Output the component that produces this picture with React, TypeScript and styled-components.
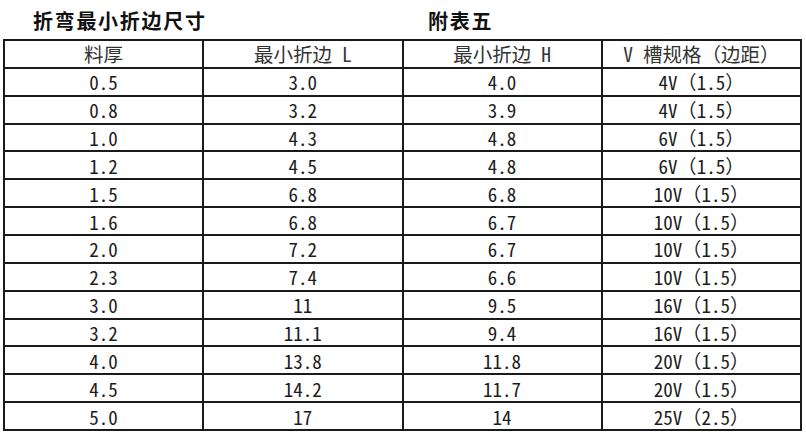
import React from 'react';
import styled, { createGlobalStyle } from 'styled-components';

// ---------------- global --------------------------------------

const GlobalStyle = createGlobalStyle`
    html, body {
        margin: 0;
        padding: 0;
        background: #ffffff;
    }

    body {
        font-family: "Noto Sans CJK SC", "DejaVu Sans", sans-serif;
        color: #222;
    }
`;

// ---------------- data --------------------------------------

const HEADINGS = ['料厚', '最小折边 L', '最小折边 H', 'V 槽规格（边距）'];

const ROWS: Array<[string, string, string, string]> = [
    ['0.5', '3.0', '4.0', '4V（1.5）'],
    ['0.8', '3.2', '3.9', '4V（1.5）'],
    ['1.0', '4.3', '4.8', '6V（1.5）'],
    ['1.2', '4.5', '4.8', '6V（1.5）'],
    ['1.5', '6.8', '6.8', '10V（1.5）'],
    ['1.6', '6.8', '6.7', '10V（1.5）'],
    ['2.0', '7.2', '6.7', '10V（1.5）'],
    ['2.3', '7.4', '6.6', '10V（1.5）'],
    ['3.0', '11', '9.5', '16V（1.5）'],
    ['3.2', '11.1', '9.4', '16V（1.5）'],
    ['4.0', '13.8', '11.8', '20V（1.5）'],
    ['4.5', '14.2', '11.7', '20V（1.5）'],
    ['5.0', '17', '14', '25V（2.5）'],
];

// ---------------- <TitleBar /> --------------------------------------

const TitleBar = styled.div`
    display: flex;
    align-items: center;
    height: 39px;
    padding-left: 33px;
    box-sizing: border-box;
`;

const Title = styled.div<{ $width?: number }>`
    width: ${p => p.$width ? `${p.$width}px` : 'auto'};
    font-size: 20px;
    font-weight: 700;
    letter-spacing: 1.7px;
    color: #111;
    line-height: 1;
    padding-top: 2px;
`;

// ---------------- <HalfWidth /> --------------------------------------

// latin runs set in half-width forms, like the old song-style fonts
const HalfWidth = styled.span`
    font-feature-settings: "hwid" 1;
`;

const CellText: React.FC<{ text: string }> = ({ text }) => (
    <>
        {text.split(/([\x20-\x7e]+)/).filter(Boolean).map((part, i) =>
            /^[\x20-\x7e]+$/.test(part)
                ? <HalfWidth key={i}>{part}</HalfWidth>
                : <React.Fragment key={i}>{part}</React.Fragment>
        )}
    </>
);

// ---------------- <SizeTable /> --------------------------------------

const SizeTable = styled.table`
    margin-left: 3px;
    width: 799px;
    table-layout: fixed;
    border-collapse: collapse;

    col {
        width: 25%;
    }

    tr {
        height: 27.86px;
    }

    th, td {
        border: 2px solid #1a1a1a;
        padding: 0;
        text-align: center;
        vertical-align: middle;
        font-size: 19px;
        font-weight: 400;
        line-height: 1;
        color: #1c1c1c;
        white-space: nowrap;
    }

    th {
        color: #333;
        font-size: 19.5px;
    }
`;

export default function App() {
    return (
        <>
            <GlobalStyle />
            <TitleBar>
                <Title $width={395}>折弯最小折边尺寸</Title>
                <Title>附表五</Title>
            </TitleBar>
            <SizeTable>
                <colgroup>
                    <col /><col /><col /><col />
                </colgroup>
                <thead>
                    <tr>
                        {HEADINGS.map(h => <th key={h}><CellText text={h} /></th>)}
                    </tr>
                </thead>
                <tbody>
                    {ROWS.map((row, i) => (
                        <tr key={i}>
                            {row.map((cell, j) => <td key={j}><CellText text={cell} /></td>)}
                        </tr>
                    ))}
                </tbody>
            </SizeTable>
        </>
    );
}
